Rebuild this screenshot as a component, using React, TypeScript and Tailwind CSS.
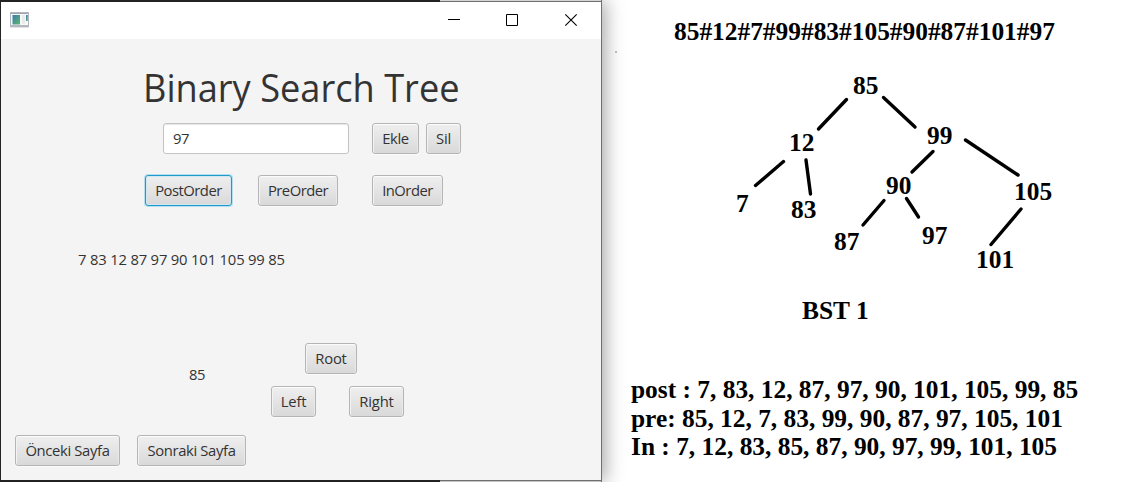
import type { ReactNode } from "react";

type ButtonProps = { children: ReactNode; className: string; focused?: boolean };

function FxButton({ children, className, focused = false }: ButtonProps) {
  const edge = focused
    ? "border-[#1f9bc9] shadow-[0_0_0_1px_#b5dff0,inset_0_0_0_1px_#d3e6ef]"
    : "border-[#b5b5b5] shadow-[inset_0_1px_0_0_#fcfcfc,inset_1px_0_0_0_#f3f3f3,inset_-1px_0_0_0_#e9e9e9,0_1px_0_0_#fafafa]";
  return (
    <button
      className={`flex h-[31px] shrink-0 items-center justify-center whitespace-nowrap rounded-[3px] border bg-linear-to-b from-[#efefef] to-[#d9d9d9] pb-px ${edge} ${className}`}
    >
      {children}
    </button>
  );
}

function AppIcon() {
  return (
    <svg width="20" height="18" viewBox="0 0 20 18">
      <defs>
        <linearGradient id="pane" x1="0" y1="0" x2="1" y2="1">
          <stop offset="0" stopColor="#3c7bb0" />
          <stop offset="1" stopColor="#5cb86a" />
        </linearGradient>
      </defs>
      <rect x="0" y="2" width="19" height="15" fill="#b3b8c0" />
      <rect x="1" y="3" width="17" height="1" fill="#9ea5b1" />
      <rect x="1" y="4" width="17" height="11" fill="#f7f8fa" />
      <rect x="2.5" y="5" width="7.5" height="9.5" fill="url(#pane)" />
      <rect x="12" y="5" width="3" height="9" fill="#ebebee" />
      <rect x="16" y="5" width="1.8" height="6" fill="url(#pane)" />
      <rect x="0" y="17" width="19" height="1" fill="#e2e2e2" />
    </svg>
  );
}

function TitleBar() {
  return (
    <header className="flex h-[37px] items-start bg-white pl-[9px]">
      <div className="pt-[8px]">
        <AppIcon />
      </div>
      <svg className="ml-auto" width="173" height="37" fill="none" stroke="#000">
        <path d="M20 17.5h12" />
        <path d="M78.5 12.5h11v11h-11z" />
        <path d="m137.3 12.3 11.4 11.4m0-11.4-11.4 11.4" strokeWidth="1.1" />
      </svg>
    </header>
  );
}

function TreeWindow() {
  return (
    <main className="flex h-[482px] w-[602px] shrink-0 flex-col border-l border-r border-l-[#242424] border-r-[#707070] bg-[#f4f4f4] font-['Open_Sans','Noto_Sans',sans-serif] text-[14.8px] text-[#333] shadow-[3px_0_18px_rgba(0,0,0,0.36)]">
      <div className="flex h-[2px] shrink-0">
        <div className="w-[439px] bg-[#242222]" />
        <div className="grow border-b border-[#707070] bg-[#d4d4d4]" />
      </div>
      <TitleBar />
      <h1 className="mt-[21px] ml-[142px] h-[55px] origin-left scale-x-[0.928] whitespace-nowrap text-[39px] leading-[54px]">
        Binary Search Tree
      </h1>
      <div className="mt-[8px] flex pl-[162px]">
        <input
          aria-label="Value"
          defaultValue="97"
          className="h-[31px] w-[186px] rounded-[3px] border border-[#c4c4c4] bg-white px-[9px] pb-px tracking-[-0.4px] shadow-[inset_0_1px_1px_#e5e5e5] outline-none"
        />
        <FxButton className="ml-[23px] w-[47px] tracking-[-0.4px]">Ekle</FxButton>
        <FxButton className="ml-[7px] w-[35px] tracking-[-0.2px]">Sil</FxButton>
      </div>
      <div className="mt-[21px] flex pl-[144px]">
        <FxButton focused className="w-[87px] tracking-[-0.5px]">PostOrder</FxButton>
        <FxButton className="ml-[26px] w-[80px] tracking-[-0.5px]">PreOrder</FxButton>
        <FxButton className="ml-[34px] w-[71px] tracking-[-0.5px]">InOrder</FxButton>
      </div>
      <p className="mt-[43px] ml-[77px] h-[20px] leading-[20px] tracking-[-0.18px]">
        7 83 12 87 97 90 101 105 99 85
      </p>
      <div className="mt-[74px] flex">
        <p className="ml-[188px] w-[82px] pt-[21px] leading-[20px] tracking-[-0.4px]">85</p>
        <div className="w-[133px]">
          <FxButton className="ml-[34px] w-[52px] tracking-[-0.2px]">Root</FxButton>
          <div className="mt-[12px] flex justify-between">
            <FxButton className="w-[45px] tracking-[-0.2px]">Left</FxButton>
            <FxButton className="w-[55px] tracking-[-0.2px]">Right</FxButton>
          </div>
        </div>
      </div>
      <div className="mt-[18px] flex gap-[17px] pl-[14px]">
        <FxButton className="w-[105px] tracking-[-0.35px]">Önceki Sayfa</FxButton>
        <FxButton className="w-[109px] tracking-[-0.35px]">Sonraki Sayfa</FxButton>
      </div>
      <div className="mt-auto flex h-[2px] shrink-0">
        <div className="w-[439px] bg-[#222]" />
        <div className="grow border-t border-[#707070] bg-[#c4c4c4]" />
      </div>
    </main>
  );
}

const nodes = [
  { label: "85", place: "left-[251px] top-[71px]" },
  { label: "12", place: "left-[187px] top-[128px]" },
  { label: "99", place: "left-[325px] top-[121px]" },
  { label: "7", place: "left-[134px] top-[189px]" },
  { label: "83", place: "left-[189px] top-[195px]" },
  { label: "90", place: "left-[284px] top-[171px]" },
  { label: "105", place: "left-[412px] top-[177px]" },
  { label: "87", place: "left-[232px] top-[227px]" },
  { label: "97", place: "left-[320px] top-[221px]" },
  { label: "101", place: "left-[374px] top-[245px]" },
];

const edges = [
  "M244.5 99.5L216.5 129",
  "M281.5 97.5L313 127",
  "M181.5 161.5L153.5 185.5",
  "M204 160L208.5 194",
  "M331 151.5L310 172",
  "M363.5 140L416 175",
  "M282 200.5L261 225",
  "M304.5 198.5L316.5 217",
  "M419 209L389 244.5",
];

function Notes() {
  return (
    <section className="relative flex h-[482px] w-[521px] flex-col whitespace-nowrap font-['Liberation_Serif',serif] text-[25.4px] leading-[28px] font-bold text-black">
      <h2 className="mt-[17px] ml-[72px]">85#12#7#99#83#105#90#87#101#97</h2>
      <svg
        className="absolute top-0 left-0"
        width="521"
        height="300"
        fill="none"
        stroke="#000"
        strokeWidth="3.4"
        strokeLinecap="round"
      >
        <rect x="13" y="51" width="2" height="2" fill="#bbb" stroke="none" />
        {edges.map((d) => (
          <path key={d} d={d} />
        ))}
      </svg>
      {nodes.map(({ label, place }) => (
        <span key={label} className={`absolute ${place}`}>
          {label}
        </span>
      ))}
      <h3 className="mt-[251px] ml-[200px]">BST 1</h3>
      <div className="mt-[51px] ml-[29px] leading-[28.6px]">
        <p>post : 7, 83, 12, 87, 97, 90, 101, 105, 99, 85</p>
        <p>pre: 85, 12, 7, 83, 99, 90, 87, 97, 105, 101</p>
        <p>In : 7, 12, 83, 85, 87, 90, 97, 99, 101, 105</p>
      </div>
    </section>
  );
}

export default function App() {
  return (
    <div className="flex h-[482px] w-[1123px] overflow-hidden bg-white">
      <TreeWindow />
      <Notes />
    </div>
  );
}
